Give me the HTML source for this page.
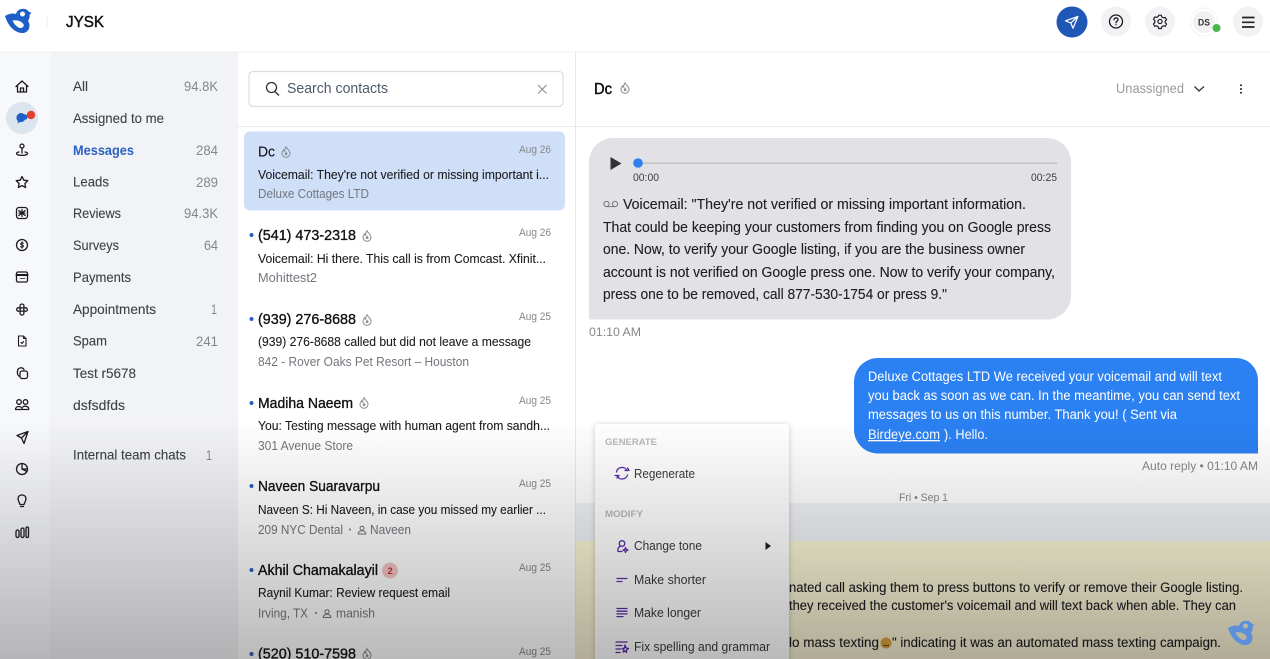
<!DOCTYPE html>
<html><head><meta charset="utf-8"><title>JYSK Messages</title>
<style>
html,body{margin:0;padding:0;width:1270px;height:659px;overflow:hidden;background:#fff}
svg{display:block;filter:blur(.3px)}
text{font-family:"Liberation Sans",sans-serif;white-space:pre}
.nav{font-size:14px;fill:#3c3f44;stroke:#3c3f44;stroke-width:.1}
.cnt{font-size:14px;fill:#85878b}
.name{font-size:15px;fill:#111;stroke:#111;stroke-width:.35}
.pv{font-size:13px;fill:#1c1c1e;stroke:#1c1c1e;stroke-width:.1}
.sub{font-size:13px;fill:#73767c}
.dt{font-size:11px;fill:#85878b}
.msg{font-size:14.5px;fill:#1d1d20;stroke:#1d1d20;stroke-width:.1}
.wh{font-size:13.5px;fill:#fff}
.yl{font-size:13.5px;fill:#1d1d20;stroke:#1d1d20;stroke-width:.1}
.mi{font-size:12.5px;fill:#3a3a40}
.ml{font-size:9.5px;font-weight:bold;fill:#b9b9bd}
.ic{fill:none;stroke:#1c1c1e;stroke-width:1.3;stroke-linecap:round;stroke-linejoin:round}
.pu{fill:none;stroke:#5a2ea6;stroke-width:1.3;stroke-linecap:round;stroke-linejoin:round}
</style></head><body>
<svg width="1270" height="659" viewBox="0 0 1270 659" xmlns="http://www.w3.org/2000/svg">
<defs>
<linearGradient id="ov" x1="0" y1="420" x2="0" y2="659" gradientUnits="userSpaceOnUse"><stop offset="0" stop-color="#000" stop-opacity="0"/><stop offset="1" stop-color="#000" stop-opacity=".27"/></linearGradient>
<linearGradient id="yw" x1="0" y1="541" x2="0" y2="659" gradientUnits="userSpaceOnUse"><stop offset="0" stop-color="#fbf7d6"/><stop offset="1" stop-color="#f3ecd0"/></linearGradient>
<filter id="sh" x="-20%" y="-20%" width="140%" height="140%"><feDropShadow dx="0" dy="1" stdDeviation="3" flood-color="#000" flood-opacity=".22"/></filter>
<symbol id="fire" viewBox="-6 -6 12 12" overflow="visible"><path d="M0-5.2C.6-3.4 4-1.8 4 1.4A4 3.8 0 0 1-4 1.4C-4-.2-3.2-1.2-2.4-2.2-2.2-1-1.6-.8-1.2-.8-1.4-2.4-1-4 0-5.2Z" fill="none" stroke="#8b8d92" stroke-width="1"/><path d="M.3-.2C1 .8 1.8 1.3 1.4 2.4.9 3.4-1 3.4-1.3 2.2-1.5 1.4-.4 1-.3-.2Z" fill="#8b8d92"/></symbol>
<symbol id="bird" viewBox="0 0 36 36" overflow="visible"><path fill-rule="evenodd" d="M5 16C9 13.500 13 13 16 14C17 10 21 8 25 9C27 9.500 28.500 11 29 12L31.500 12.500 29.500 15C30 17 29 19.500 28 21C31 25 29.500 32 23.500 33C15 33.500 8 26 5 16ZM22.500 11.500A2.500 2.500 0 1 0 22.510 11.500ZM12.500 20.500C17 19.500 21 21 23.500 24C24.500 27 21.500 29 18.500 27.500C16 26 14 24 12.500 20.500Z"/></symbol>
<symbol id="person" viewBox="-5 -5 10 10" overflow="visible"><circle cy="-1.800" r="2" fill="none" stroke="#73767c"/><path d="M-3.800 4C-3.500 1.500-1.500.8 0 .8S3.500 1.500 3.800 4Z" fill="none" stroke="#73767c"/></symbol>
</defs>

<rect width="1270" height="659" fill="#fff"/>
<!-- panes -->
<rect x="0" y="52" width="50" height="607" fill="#f7f8fb"/>
<rect x="50" y="52" width="188" height="607" fill="#f2f3f6"/>
<rect x="0" y="51.500" width="1270" height="1" fill="#f1f1f3"/>
<rect x="575" y="52" width="1" height="607" fill="#e8e8eb"/>
<rect x="238" y="126" width="337" height="1" fill="#ececee"/>
<rect x="576" y="126" width="694" height="1" fill="#ececee"/>

<!-- top bar -->
<use href="#bird" x="0" y="0" width="36" height="36" fill="#1d5fc6"/>
<rect x="46.500" y="15" width="1" height="14" fill="#eeeeef"/>
<text x="66" y="27" font-size="15.500" textLength="38" lengthAdjust="spacingAndGlyphs" fill="#111" stroke="#111" stroke-width=".45">JYSK</text>

<circle cx="1072" cy="22" r="15.500" fill="#2058b8"/>
<path d="M1078 16.500 1065.500 20.800 1070.800 23 1073 28.300ZM1070.800 23 1078 16.500" fill="none" stroke="#fff" stroke-width="1.200" stroke-linejoin="round"/>
<circle cx="1116" cy="21.500" r="15" fill="#f2f2f4"/>
<circle cx="1116" cy="21.500" r="6.500" class="ic"/>
<path d="M1114 19.800C1114 17.200 1118.200 17.400 1118 19.800 1117.900 21.200 1116 21 1116 22.800" class="ic" stroke-width="1.100"/>
<circle cx="1116" cy="24.800" r=".7" fill="#1c1c1e"/>
<circle cx="1160" cy="21.500" r="15" fill="#f2f2f4"/>
<g transform="translate(1160 21.500) scale(.9) translate(-1160 -21.500)"><path d="M1158.500 14.500h3l.5 2 1.800 1 2-.6 1.500 2.600-1.500 1.500v1.800l1.500 1.500-1.500 2.600-2-.6-1.800 1-.5 2h-3l-.5-2-1.800-1-2 .6-1.500-2.600 1.500-1.500V20.500L1152.700 19l1.500-2.600 2 .6 1.800-1Z" class="ic" stroke-width="1.100"/>
<circle cx="1160" cy="21.500" r="2.300" class="ic" stroke-width="1.100"/></g>
<circle cx="1204" cy="22" r="14" fill="#fff" stroke="#f2f2f4"/>
<circle cx="1204" cy="22" r="11" fill="#f1f1f3"/>
<text x="1198" y="25.500" font-size="9.500" font-weight="bold" fill="#333" textLength="12" lengthAdjust="spacingAndGlyphs">DS</text>
<circle cx="1216.500" cy="28" r="4.500" fill="#4bb54e" stroke="#f7f7f7"/>
<circle cx="1248" cy="22" r="15" fill="#f2f2f4"/>
<path d="M1242 17.500h12.500M1242 22.300h12.500M1242 27h12.500" stroke="#222" stroke-width="1.700" fill="none"/>

<!-- rail icons -->
<g class="ic">
<path d="M16 86.500 22 81 28 86.500M17.500 85.500V92H26.500V85.500M20.500 92V88H23.500V92" />
<circle cx="22" cy="146" r="2"/><path d="M22 148V153M16.500 153.500C16.500 156 27.500 156 27.500 153.500 27.500 152.500 25.500 152 25 152M16.500 153.500C16.500 152.500 18.500 152 19 152"/>
<path d="M22 176.500 23.800 180.200 27.800 180.700 24.900 183.500 25.600 187.500 22 185.600 18.400 187.500 19.100 183.500 16.200 180.700 20.200 180.200Z"/>
<rect x="16.500" y="207.500" width="11" height="11" rx="2.500"/><path d="M22 209.500V216.500M18.800 210.500 25.200 215.500M25.200 210.500 18.800 215.500M19 213H25"/>
<circle cx="22" cy="245" r="5.500"/><path d="M23.500 243.300C22.500 242.300 20.500 242.800 20.700 244 20.900 245.200 23.400 244.700 23.400 246.100 23.400 247.300 21.300 247.600 20.400 246.600M22 241.800V248.200" stroke-width="1"/>
<rect x="16.500" y="272" width="11" height="10" rx="1.500"/><path d="M16.500 275H27.500" stroke-width="2"/><path d="M20 278.500H25" stroke-width=".8"/>
<circle cx="22" cy="306" r="2"/><circle cx="22" cy="313" r="2"/><circle cx="18.500" cy="309.500" r="1.800"/><circle cx="25.500" cy="309.500" r="1.800"/>
<path d="M18.500 336H23.500L26 338.500V346H18.500ZM23.500 336V338.500H26M21 342.500 22 343.500 23.500 341.500" stroke-width="1.100"/>
<path d="M17.500 371.500A3.500 3.500 0 0 1 24 369.500"/><rect x="20" y="371" width="7.500" height="7.500" rx="2"/><path d="M17.500 371.500C17 374 18 376 20 376.500"/>
<circle cx="19" cy="402" r="2.300"/><circle cx="25.500" cy="402" r="2.300"/><path d="M15.500 409.500C15.500 405.500 22 405.500 22.300 409.500ZM22.300 409.500H28.800C28.800 406 24.500 405.500 22.800 407"/>
<path d="M28 431.500 17 435.500 21.500 438 24 443.500ZM21.500 438 28 431.500"/>
<circle cx="22" cy="469" r="5.500"/><path d="M22 469V463.500M22 469H27.500" stroke-width="1.300"/><path d="M22 469 27 471.500"/>
<path d="M19 502C17 498 18.500 495 22 495S27 498 25 502L24 504.500H20ZM20.500 506.500H23.500"/>
<rect x="16" y="530" width="3" height="7.500" rx="1.500"/><rect x="21" y="528" width="3" height="9.500" rx="1.500"/><rect x="26" y="527" width="2.500" height="10.500" rx="1.250"/>
</g>
<circle cx="22" cy="118" r="16" fill="#dce4ee"/>
<path d="M17 115.500A4.500 4.500 0 0 1 25.500 117.500C25.500 120.500 23 122.500 20 122L17.500 123.500 18 121C16.500 120 16 117.500 17 115.500Z" fill="#1d5fc6"/>
<path d="M24 114.500C25.500 114 27.500 115 27.500 117 27.500 119 26 120 24.800 119.500Z" fill="#1d5fc6"/>
<circle cx="31" cy="115" r="4.200" fill="#e2402f"/>

<!-- nav -->
<text class="nav" x="73" y="91" textLength="15" lengthAdjust="spacingAndGlyphs">All</text><text class="cnt" x="184" y="91" textLength="34" lengthAdjust="spacingAndGlyphs">94.8K</text>
<text class="nav" x="73" y="123" textLength="91" lengthAdjust="spacingAndGlyphs">Assigned to me</text>
<text x="73" y="155" font-size="14" font-weight="bold" fill="#2a5fc0" textLength="61" lengthAdjust="spacingAndGlyphs">Messages</text><text class="cnt" x="196" y="155" textLength="22" lengthAdjust="spacingAndGlyphs">284</text>
<text class="nav" x="73" y="186.500" textLength="36" lengthAdjust="spacingAndGlyphs">Leads</text><text class="cnt" x="196" y="187" textLength="22" lengthAdjust="spacingAndGlyphs">289</text>
<text class="nav" x="73" y="218" textLength="48" lengthAdjust="spacingAndGlyphs">Reviews</text><text class="cnt" x="184" y="218" textLength="34" lengthAdjust="spacingAndGlyphs">94.3K</text>
<text class="nav" x="73" y="250" textLength="46" lengthAdjust="spacingAndGlyphs">Surveys</text><text class="cnt" x="204" y="250" textLength="14" lengthAdjust="spacingAndGlyphs">64</text>
<text class="nav" x="73" y="282" textLength="58" lengthAdjust="spacingAndGlyphs">Payments</text>
<text class="nav" x="73" y="314" textLength="83" lengthAdjust="spacingAndGlyphs">Appointments</text><text class="cnt" x="211" y="314" textLength="6" lengthAdjust="spacingAndGlyphs">1</text>
<text class="nav" x="73" y="345.500" textLength="34" lengthAdjust="spacingAndGlyphs">Spam</text><text class="cnt" x="196" y="346" textLength="22" lengthAdjust="spacingAndGlyphs">241</text>
<text class="nav" x="73" y="378" textLength="63" lengthAdjust="spacingAndGlyphs">Test r5678</text>
<text class="nav" x="73" y="410" textLength="52" lengthAdjust="spacingAndGlyphs">dsfsdfds</text>
<text class="nav" x="73" y="459.500" textLength="113" lengthAdjust="spacingAndGlyphs">Internal team chats</text><text class="cnt" x="206" y="460" textLength="6" lengthAdjust="spacingAndGlyphs">1</text>

<!-- search -->
<rect x="249" y="71.500" width="314" height="35" rx="4" fill="#fff" stroke="#dcdde0" stroke-width="1.200"/>
<circle cx="271.500" cy="87.500" r="5" fill="none" stroke="#333" stroke-width="1.300"/><path d="M275 91.500 279 95.500" stroke="#333" stroke-width="1.300"/>
<text x="287" y="93" font-size="14.500" fill="#4d5a6b" textLength="101" lengthAdjust="spacingAndGlyphs">Search contacts</text>
<path d="M538 85 546.500 93.500M546.500 85 538 93.500" stroke="#888" stroke-width="1"/>

<!-- list -->
<rect x="244" y="131.500" width="321" height="79" rx="6" fill="#cfdff8"/>
<text class="name" x="258" y="156.500" textLength="17" lengthAdjust="spacingAndGlyphs" style="stroke-width:.1">Dc</text>
<use href="#fire" x="280" y="146" width="12" height="12"/>
<text class="dt" x="519" y="153" textLength="32" lengthAdjust="spacingAndGlyphs">Aug 26</text>
<text class="pv" x="258" y="179" textLength="291" lengthAdjust="spacingAndGlyphs">Voicemail: They're not verified or missing important i...</text>
<text class="sub" x="258" y="198" textLength="111" lengthAdjust="spacingAndGlyphs">Deluxe Cottages LTD</text>

<circle cx="251.500" cy="235" r="2" fill="#2a5fc0"/>
<text class="name" x="258" y="240" textLength="98" lengthAdjust="spacingAndGlyphs">(541) 473-2318</text>
<use href="#fire" x="361" y="230" width="12" height="12"/>
<text class="dt" x="519" y="236" textLength="32" lengthAdjust="spacingAndGlyphs">Aug 26</text>
<text class="pv" x="258" y="263" textLength="288" lengthAdjust="spacingAndGlyphs">Voicemail: Hi there. This call is from Comcast. Xfinit...</text>
<text class="sub" x="258" y="282" textLength="59" lengthAdjust="spacingAndGlyphs">Mohittest2</text>

<circle cx="251.500" cy="319" r="2" fill="#2a5fc0"/>
<text class="name" x="258" y="324" textLength="98" lengthAdjust="spacingAndGlyphs">(939) 276-8688</text>
<use href="#fire" x="361" y="314" width="12" height="12"/>
<text class="dt" x="519" y="320" textLength="32" lengthAdjust="spacingAndGlyphs">Aug 25</text>
<text class="pv" x="258" y="346" textLength="273" lengthAdjust="spacingAndGlyphs">(939) 276-8688 called but did not leave a message</text>
<text class="sub" x="258" y="366" textLength="211" lengthAdjust="spacingAndGlyphs">842 - Rover Oaks Pet Resort – Houston</text>

<circle cx="251.500" cy="403" r="2" fill="#2a5fc0"/>
<text class="name" x="258" y="408" textLength="95" lengthAdjust="spacingAndGlyphs">Madiha Naeem</text>
<use href="#fire" x="358" y="397" width="12" height="12"/>
<text class="dt" x="519" y="404" textLength="32" lengthAdjust="spacingAndGlyphs">Aug 25</text>
<text class="pv" x="258" y="430" textLength="292" lengthAdjust="spacingAndGlyphs">You: Testing message with human agent from sandh...</text>
<text class="sub" x="258" y="450" textLength="95" lengthAdjust="spacingAndGlyphs">301 Avenue Store</text>

<circle cx="251.500" cy="486" r="2" fill="#2a5fc0"/>
<text class="name" x="258" y="491" textLength="122" lengthAdjust="spacingAndGlyphs">Naveen Suaravarpu</text>
<text class="dt" x="519" y="487" textLength="32" lengthAdjust="spacingAndGlyphs">Aug 25</text>
<text class="pv" x="258" y="514" textLength="288" lengthAdjust="spacingAndGlyphs">Naveen S: Hi Naveen, in case you missed my earlier ...</text>
<text class="sub" x="258" y="534" textLength="85" lengthAdjust="spacingAndGlyphs">209 NYC Dental</text>
<circle cx="350" cy="529.500" r="1" fill="#73767c"/>
<use href="#person" x="357" y="525" width="10" height="10"/>
<text class="sub" x="370" y="534" textLength="41" lengthAdjust="spacingAndGlyphs">Naveen</text>

<circle cx="251.500" cy="570" r="2" fill="#2a5fc0"/>
<text class="name" x="258" y="575" textLength="120" lengthAdjust="spacingAndGlyphs">Akhil Chamakalayil</text>
<circle cx="390" cy="570.500" r="8" fill="#f3c6c6"/>
<text x="387.500" y="574" font-size="9.500" font-weight="bold" fill="#c8352d">2</text>
<text class="dt" x="519" y="571" textLength="32" lengthAdjust="spacingAndGlyphs">Aug 25</text>
<text class="pv" x="258" y="597" textLength="192" lengthAdjust="spacingAndGlyphs">Raynil Kumar: Review request email</text>
<text class="sub" x="258" y="617.500" textLength="50" lengthAdjust="spacingAndGlyphs">Irving, TX</text>
<circle cx="316" cy="613" r="1" fill="#73767c"/>
<use href="#person" x="322" y="608.500" width="10" height="10"/>
<text class="sub" x="336" y="617.500" textLength="39" lengthAdjust="spacingAndGlyphs">manish</text>

<circle cx="251.500" cy="654" r="2" fill="#2a5fc0"/>
<text class="name" x="258" y="658.500" textLength="98" lengthAdjust="spacingAndGlyphs">(520) 510-7598</text>
<use href="#fire" x="361" y="648" width="12" height="12"/>
<text class="dt" x="519" y="655" textLength="32" lengthAdjust="spacingAndGlyphs">Aug 25</text>

<!-- conversation header -->
<text x="594" y="94" font-size="16" fill="#111" stroke="#111" stroke-width=".5" textLength="18" lengthAdjust="spacingAndGlyphs">Dc</text>
<use href="#fire" x="619" y="82" width="12" height="12"/>
<text x="1116" y="93" font-size="14" fill="#9a9b9e" textLength="68" lengthAdjust="spacingAndGlyphs">Unassigned</text>
<path d="M1194.500 86.500 1199 91 1204 86.500" fill="none" stroke="#333" stroke-width="1.300"/>
<circle cx="1241" cy="85.300" r="1" fill="#222"/><circle cx="1241" cy="89" r="1" fill="#222"/><circle cx="1241" cy="92.700" r="1" fill="#222"/>

<!-- voicemail bubble -->
<path d="M613 138H1047A24 24 0 0 1 1071 162V295A24 24 0 0 1 1047 319.500H589V162A24 24 0 0 1 613 138Z" fill="#e1e1e6"/>
<path d="M610.500 157 621.500 163.500 610.500 170Z" fill="#333"/>
<rect x="638" y="162.500" width="419" height="1.300" fill="#bdbdc1"/>
<circle cx="638" cy="163" r="4.800" fill="#2f7fee"/>
<text x="633" y="181" font-size="11" fill="#3c3c40" textLength="26" lengthAdjust="spacingAndGlyphs">00:00</text>
<text x="1031" y="181" font-size="11" fill="#3c3c40" textLength="26" lengthAdjust="spacingAndGlyphs">00:25</text>
<circle cx="606.500" cy="204" r="2.600" fill="none" stroke="#77787d"/><circle cx="615" cy="204" r="2.600" fill="none" stroke="#77787d"/><path d="M606.500 206.600H615" stroke="#77787d" fill="none"/>
<text class="msg" x="623" y="209" textLength="403" lengthAdjust="spacingAndGlyphs">Voicemail: "They're not verified or missing important information.</text>
<text class="msg" x="603" y="232" textLength="448" lengthAdjust="spacingAndGlyphs">That could be keeping your customers from finding you on Google press</text>
<text class="msg" x="603" y="254" textLength="422" lengthAdjust="spacingAndGlyphs">one. Now, to verify your Google listing, if you are the business owner</text>
<text class="msg" x="603" y="277" textLength="452" lengthAdjust="spacingAndGlyphs">account is not verified on Google press one. Now to verify your company,</text>
<text class="msg" x="603" y="299" textLength="344" lengthAdjust="spacingAndGlyphs">press one to be removed, call 877-530-1754 or press 9."</text>
<text x="589" y="336" font-size="12" fill="#85878b" textLength="52" lengthAdjust="spacingAndGlyphs">01:10 AM</text>

<!-- sent bubble -->
<path d="M878 358H1236A22 22 0 0 1 1258 380V453.500H878A24 24 0 0 1 854 429.500V382A24 24 0 0 1 878 358Z" fill="#2b80f2"/>
<text class="wh" x="868" y="381" textLength="354" lengthAdjust="spacingAndGlyphs">Deluxe Cottages LTD We received your voicemail and will text</text>
<text class="wh" x="868" y="400" textLength="372" lengthAdjust="spacingAndGlyphs">you back as soon as we can. In the meantime, you can send text</text>
<text class="wh" x="868" y="419" textLength="309" lengthAdjust="spacingAndGlyphs">messages to us on this number. Thank you! ( Sent via</text>
<text class="wh" x="868" y="439" textLength="72" lengthAdjust="spacingAndGlyphs" text-decoration="underline">Birdeye.com</text>
<text class="wh" x="944" y="439" textLength="44" lengthAdjust="spacingAndGlyphs">). Hello.</text>
<text x="1142" y="470" font-size="12" fill="#85878b" textLength="116" lengthAdjust="spacingAndGlyphs">Auto reply • 01:10 AM</text>
<text x="899" y="501" font-size="11" fill="#85878b" textLength="49" lengthAdjust="spacingAndGlyphs">Fri • Sep 1</text>

<!-- lower bands -->
<rect x="576" y="503" width="694" height="38" fill="#f0f2f5"/>
<rect x="576" y="541" width="694" height="118" fill="url(#yw)"/>
<text class="yl" x="789" y="592" textLength="454" lengthAdjust="spacingAndGlyphs">nated call asking them to press buttons to verify or remove their Google listing.</text>
<text class="yl" x="789" y="610" textLength="447" lengthAdjust="spacingAndGlyphs">they received the customer's voicemail and will text back when able. They can</text>
<text class="yl" x="789" y="647" textLength="90" lengthAdjust="spacingAndGlyphs">lo mass texting</text>
<circle cx="886" cy="643" r="5.500" fill="#d8a23c"/><path d="M883 645.500H889" stroke="#7a5220" stroke-width="1.200"/>
<text class="yl" x="892" y="647" textLength="329" lengthAdjust="spacingAndGlyphs">" indicating it was an automated mass texting campaign.</text>

<!-- menu -->
<rect x="595" y="424" width="194" height="245" rx="4" fill="#fff" filter="url(#sh)"/>
<text class="ml" x="605" y="445" textLength="52" lengthAdjust="spacingAndGlyphs">GENERATE</text>
<path d="M616.500 472C617.500 466.500 625 466 627 470.500M627.500 475C626 480 618.500 480.500 616.800 475.500" class="pu"/>
<path d="M625 470.500H629L627.500 468M615 475.500H619L617 478" class="pu" stroke-width="1"/>
<text class="mi" x="634" y="478" textLength="61" lengthAdjust="spacingAndGlyphs">Regenerate</text>
<text class="ml" x="605" y="517" textLength="38" lengthAdjust="spacingAndGlyphs">MODIFY</text>
<circle cx="622" cy="543.500" r="2.800" class="pu"/><path d="M620 546.500C618 547.500 617.500 549.500 618 551.500H622M625.500 547.500 626.200 549.300 628 550 626.200 550.700 625.500 552.500 624.800 550.700 623 550 624.800 549.300Z" class="pu" stroke-width="1.100"/>
<text class="mi" x="634" y="550" textLength="68" lengthAdjust="spacingAndGlyphs">Change tone</text>
<path d="M765.500 542 771 546 765.500 550Z" fill="#222"/>
<path d="M617 578.500H627M617 581.500H622" class="pu"/>
<text class="mi" x="634" y="584" textLength="72" lengthAdjust="spacingAndGlyphs">Make shorter</text>
<path d="M617 608.500H627M617 611.200H627M617 613.900H627M617 616.600H623" class="pu"/>
<text class="mi" x="634" y="617" textLength="67" lengthAdjust="spacingAndGlyphs">Make longer</text>
<path d="M616 642H627M616 645.500H622M616 649H621M616 652.500H620M625 645 626 648 628.500 648.500 626.500 650 626.500 652.500 625 651 623 652 624 650 622.500 648.500 624.500 648Z" class="pu" stroke-width="1.100"/>
<text class="mi" x="634" y="651" textLength="136" lengthAdjust="spacingAndGlyphs">Fix spelling and grammar</text>

<!-- dark gradient overlay -->
<rect x="0" y="420" width="1270" height="239" fill="url(#ov)"/>
<use href="#bird" x="1223" y="612" width="36" height="36" fill="#5b8fdc"/>
</svg>
</body></html>
